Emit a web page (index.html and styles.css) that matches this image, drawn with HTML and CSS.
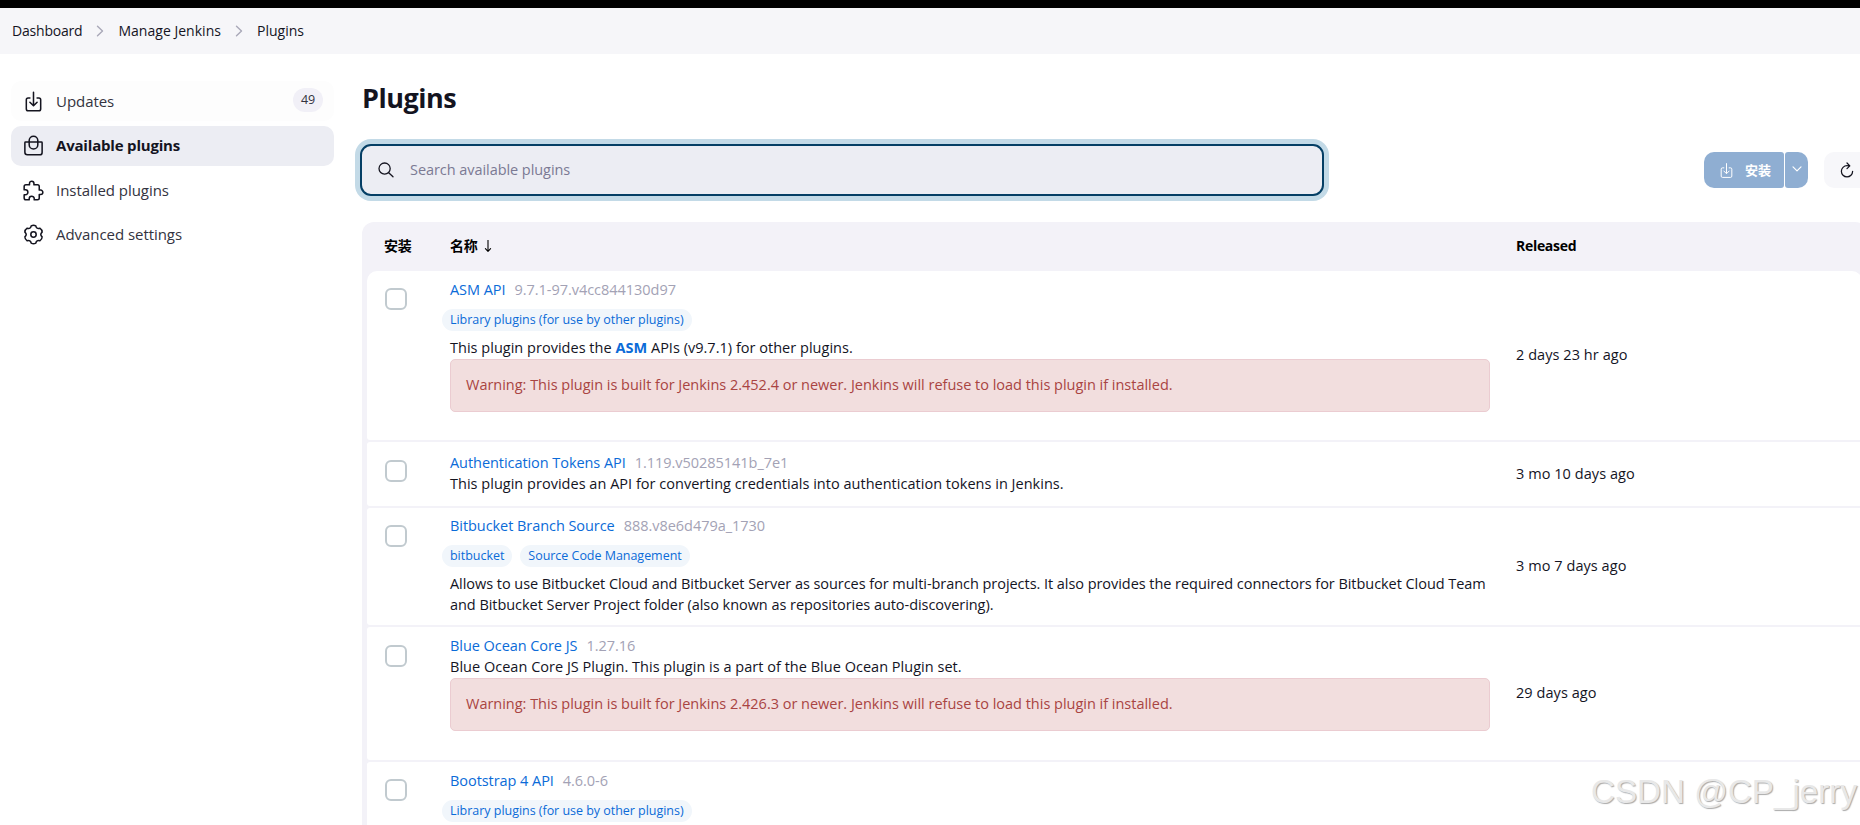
FILE: index.html
```html
<!DOCTYPE html>
<html lang="zh-CN">
<head>
    <meta charset="UTF-8">
    <meta name="viewport" content="width=device-width, initial-scale=1.0">
    <title>Plugins</title>
    <link rel="stylesheet" href="styles.css">
</head>
<body>
    <div class="topbar"></div>
    <nav class="breadcrumbs">
        <span class="crumb">Dashboard</span>
        <svg class="chevron" viewBox="0 0 8 12"><path d="M1.5 1.2l5 4.8-5 4.8"/></svg>
        <span class="crumb">Manage Jenkins</span>
        <svg class="chevron" viewBox="0 0 8 12"><path d="M1.5 1.2l5 4.8-5 4.8"/></svg>
        <span class="crumb">Plugins</span>
    </nav>

    <div class="page">
        <aside class="sidebar">
            <a class="task task-hover">
                <svg class="icon" viewBox="0 0 512 512"><path d="M336 176h40a40 40 0 0140 40v208a40 40 0 01-40 40H136a40 40 0 01-40-40V216a40 40 0 0140-40h40M176 272l80 80 80-80M256 48v288"/></svg>
                <span>Updates</span>
                <span class="badge">49</span>
            </a>
            <a class="task task-active">
                <svg class="icon" viewBox="0 0 512 512"><path d="M80 176a16 16 0 00-16 16v216c0 30.24 25.76 56 56 56h272c30.24 0 56-24.51 56-54.75V192a16 16 0 00-16-16zM160 176v-32a96 96 0 0196-96h0a96 96 0 0196 96v32M160 176v64a96 96 0 0096 96h0a96 96 0 0096-96v-64"/></svg>
                <span>Available plugins</span>
            </a>
            <a class="task">
                <svg class="icon" viewBox="0 0 512 512"><path d="M413.66 246.1H386a2 2 0 01-2-2v-77.24A38.86 38.86 0 00345.14 128H267.9a2 2 0 01-2-2V98.34c0-27.14-21.5-49.86-48.64-50.33a49.53 49.53 0 00-50.4 49.51V126a2 2 0 01-2 2H87.62A39.74 39.74 0 0048 167.62V238a2 2 0 002 2h26.91c29.37 0 53.68 25.48 54.09 54.85.42 29.87-23.51 57.15-53.29 57.15H50a2 2 0 00-2 2v70.38A39.74 39.74 0 0087.62 464H158a2 2 0 002-2v-20.93c0-30.28 24.75-56.35 55-57.06 30.1-.7 57 20.31 57 50.28V462a2 2 0 002 2h71.14A38.86 38.86 0 00384 425.14v-78a2 2 0 012-2h28.48c27.63 0 49.52-22.67 49.52-50.4s-23.2-48.64-50.34-48.64z"/></svg>
                <span>Installed plugins</span>
            </a>
            <a class="task">
                <svg class="icon icon-gear" viewBox="0 0 24 24"><path d="M9.6 3Q12 1.6 14.4 3Q15.1 6.6 18.6 5.4Q21 6.9 21 9.6Q18.2 12 21 14.4Q21 17.1 18.6 18.6Q15.1 17.4 14.4 21Q12 22.4 9.6 21Q8.9 17.4 5.4 18.6Q3 17.1 3 14.4Q5.8 12 3 9.6Q3 6.9 5.4 5.4Q8.9 6.6 9.6 3Z"/><circle cx="12" cy="12" r="2.8"/></svg>
                <span>Advanced settings</span>
            </a>
        </aside>

        <main class="main">
            <h1>Plugins</h1>

            <div class="controls">
                <div class="search">
                    <svg class="search-icon" viewBox="0 0 16 16"><circle cx="6.6" cy="6.6" r="5.6"/><path d="M10.7 10.7l4.3 4"/></svg>
                    <input type="text" placeholder="Search available plugins">
                </div>
                <div class="actions">
                    <button class="btn btn-install">
                        <svg class="btn-icon" viewBox="0 0 512 512"><path d="M336 176h40a40 40 0 0140 40v208a40 40 0 01-40 40H136a40 40 0 01-40-40V216a40 40 0 0140-40h40M176 272l80 80 80-80M256 48v288"/></svg>
                        <span>安装</span>
                    </button>
                    <button class="btn btn-more">
                        <svg class="more-icon" viewBox="0 0 10 6"><path d="M1 .8l4 4 4-4"/></svg>
                    </button>
                    <button class="btn btn-refresh">
                        <svg class="refresh-icon" viewBox="0 0 512 512"><path d="M320 146s24.36-12-64-12a160 160 0 10160 160M256 58l80 80-80 80"/></svg>
                    </button>
                </div>
            </div>

            <div class="table">
                <div class="thead">
                    <div class="col-check">安装</div>
                    <div class="col-name">名称
                        <svg class="sort" viewBox="0 0 8 12"><path d="M4 0v11M1.4 8.6L4 11.3l2.6-2.7"/></svg>
                    </div>
                    <div class="col-date">Released</div>
                </div>

                <div class="row row-warn-tags">
                    <div class="col-check"><span class="checkbox"></span></div>
                    <div class="col-name">
                        <div class="title"><a>ASM API</a><span class="version">9.7.1-97.v4cc844130d97</span></div>
                        <div class="tags"><a class="tag">Library plugins (for use by other plugins)</a></div>
                        <div class="desc">This plugin provides the <a class="strong">ASM</a> APIs (v9.7.1) for other plugins.</div>
                        <div class="alert">Warning: This plugin is built for Jenkins 2.452.4 or newer. Jenkins will refuse to load this plugin if installed.</div>
                    </div>
                    <div class="col-date">2 days 23 hr ago</div>
                </div>

                <div class="row row-plain">
                    <div class="col-check"><span class="checkbox"></span></div>
                    <div class="col-name">
                        <div class="title"><a>Authentication Tokens API</a><span class="version">1.119.v50285141b_7e1</span></div>
                        <div class="desc">This plugin provides an API for converting credentials into authentication tokens in Jenkins.</div>
                    </div>
                    <div class="col-date">3 mo 10 days ago</div>
                </div>

                <div class="row row-tags">
                    <div class="col-check"><span class="checkbox"></span></div>
                    <div class="col-name">
                        <div class="title"><a>Bitbucket Branch Source</a><span class="version">888.v8e6d479a_1730</span></div>
                        <div class="tags"><a class="tag">bitbucket</a><a class="tag">Source Code Management</a></div>
                        <div class="desc">Allows to use Bitbucket Cloud and Bitbucket Server as sources for multi-branch projects. It also provides the required connectors for Bitbucket Cloud Team<br>and Bitbucket Server Project folder (also known as repositories auto-discovering).</div>
                    </div>
                    <div class="col-date">3 mo 7 days ago</div>
                </div>

                <div class="row row-warn">
                    <div class="col-check"><span class="checkbox"></span></div>
                    <div class="col-name">
                        <div class="title"><a>Blue Ocean Core JS</a><span class="version">1.27.16</span></div>
                        <div class="desc">Blue Ocean Core JS Plugin. This plugin is a part of the Blue Ocean Plugin set.</div>
                        <div class="alert">Warning: This plugin is built for Jenkins 2.426.3 or newer. Jenkins will refuse to load this plugin if installed.</div>
                    </div>
                    <div class="col-date">29 days ago</div>
                </div>

                <div class="row row-warn-tags">
                    <div class="col-check"><span class="checkbox"></span></div>
                    <div class="col-name">
                        <div class="title"><a>Bootstrap 4 API</a><span class="version">4.6.0-6</span></div>
                        <div class="tags"><a class="tag">Library plugins (for use by other plugins)</a></div>
                    </div>
                    <div class="col-date"></div>
                </div>
            </div>
        </main>
    </div>

    <div class="watermark">CSDN @CP_jerry</div>
</body>
</html>
```
FILE: styles.css
```css
* {
    box-sizing: border-box;
}
body {
    margin: 0;
    height: 825px;
    overflow: hidden;
    background: #fff;
    color: #14141f;
    font-family: "Open Sans", "Noto Sans CJK SC", sans-serif;
    font-size: 14.5px;
    line-height: 21px;
}
svg {
    display: block;
    flex-shrink: 0;
    fill: none;
    stroke: currentColor;
    stroke-linecap: round;
    stroke-linejoin: round;
}
.topbar {
    height: 8px;
    background: #000;
}
.breadcrumbs {
    display: flex;
    align-items: center;
    height: 46px;
    padding: 0 0 1px 12px;
    background: #f6f6f9;
    font-size: 14px;
    letter-spacing: 0.02px;
}
.crumb:first-child {
    letter-spacing: -0.2px;
}
.chevron {
    width: 8px;
    height: 12px;
    margin: 0 14px;
    stroke: #a9a8b8;
    stroke-width: 1.4;
}
.page {
    display: flex;
}
.sidebar {
    display: flex;
    flex-direction: column;
    flex-shrink: 0;
    gap: 4.6px;
    width: 362px;
    padding: 27px 28px 0 11px;
}
.task {
    display: flex;
    align-items: center;
    height: 40px;
    padding: 0 11px 0 11px;
    border-radius: 10px;
    font-size: 15px;
    letter-spacing: -0.05px;
    color: #333340;
}
.task-hover {
    background: #fdfdfd;
}
.task-active {
    background: #ecedf3;
    color: #14141f;
    font-weight: 700;
    letter-spacing: -0.19px;
}
.icon {
    width: 23px;
    height: 23px;
    margin-right: 11px;
    stroke: #14141f;
    stroke-width: 34;
}
.icon-gear {
    stroke-width: 1.6;
}
.badge {
    margin: -2px 0 0 auto;
    width: 30px;
    height: 24px;
    border-radius: 12px;
    background: #f1f0f7;
    font-size: 12.5px;
    line-height: 23px;
    text-align: center;
}
.main {
    width: 1505px;
    flex-shrink: 0;
}
h1 {
    margin: 0;
    padding-top: 27px;
    font-size: 27px;
    font-weight: 700;
    line-height: 34px;
    letter-spacing: -0.5px;
}
.controls {
    display: flex;
    align-items: center;
    margin: 29px 0 26px -1px;
    height: 52px;
}
.search {
    display: flex;
    align-items: center;
    flex-shrink: 0;
    width: 964px;
    height: 52px;
    margin-left: -1px;
    padding-left: 16px;
    border: 2px solid #053f65;
    border-radius: 11px;
    background: #ecedf3;
    box-shadow: 0 0 0 5px #c3dae7;
}
.search-icon {
    width: 16px;
    height: 16px;
    margin-right: 16px;
    stroke-width: 1.3;
}
.search input {
    flex: 1;
    padding: 0 0 2px;
    border: 0;
    outline: 0;
    background: none;
    font: inherit;
    letter-spacing: -0.06px;
}
.search input::placeholder {
    color: #7b7a93;
    opacity: 1;
}
.actions {
    display: flex;
    flex-shrink: 0;
    margin-left: 380px;
}
.btn {
    display: flex;
    align-items: center;
    height: 36px;
    padding: 0;
    border: 0;
    color: #fff;
    background: #8faed2;
    font-family: inherit;
    font-size: 13px;
    font-weight: 700;
}
.btn-install {
    width: 80px;
    padding-left: 14px;
    border-radius: 10px 3px 3px 10px;
}
.btn-icon {
    width: 17px;
    height: 17px;
    margin-right: 10px;
    stroke-width: 30;
}
.btn-install span {
    padding-bottom: 2px;
}
.btn-more {
    justify-content: center;
    width: 23px;
    margin-left: 1px;
    border-radius: 3px 10px 10px 3px;
}
.more-icon {
    width: 10px;
    height: 6px;
    margin-bottom: 2px;
    stroke-width: 1.2;
}
.btn-refresh {
    width: 46px;
    margin-left: 16px;
    padding-left: 14px;
    border-radius: 10px;
    background: #f7f7fa;
    color: #14141f;
}
.refresh-icon {
    width: 18px;
    height: 18px;
    stroke-width: 36;
}
.table {
    height: 603px;
    padding: 0 5px;
    border-radius: 12px 12px 0 0;
    background: #f3f2f8;
    overflow: hidden;
}
.thead {
    display: flex;
    align-items: center;
    height: 49px;
    padding-bottom: 2px;
    color: #000;
    font-size: 14px;
    font-weight: 700;
    letter-spacing: -0.3px;
}
.row {
    display: flex;
    margin-bottom: 2px;
    border-radius: 3px;
    background: #fff;
}
.thead + .row {
    border-radius: 10px 10px 3px 3px;
}
.col-check {
    width: 83px;
    padding-left: 17px;
}
.col-name {
    width: 1040px;
}
.thead .col-name {
    display: flex;
    align-items: center;
}
.sort {
    width: 8px;
    height: 12px;
    margin-left: 7px;
    stroke-width: 1.1;
}
.col-date {
    margin-left: 26px;
}
.row .col-date {
    align-self: center;
    padding-bottom: 2px;
    letter-spacing: 0.06px;
}
.row .col-check {
    padding: 17px 0 0 18px;
}
.row .col-name {
    padding-top: 8px;
}
.row-warn-tags {
    height: 169px;
}
.row-plain {
    height: 64px;
}
.row-plain .col-name {
    padding-top: 10px;
}
.row-plain .col-check,
.row-warn .col-check {
    padding-top: 18px;
}
.row-tags {
    height: 117px;
}
.row-tags .col-name {
    padding-top: 7px;
}
.row-warn {
    height: 133px;
}
.checkbox {
    display: block;
    width: 22px;
    height: 22px;
    border: 2px solid #c1cacf;
    border-radius: 6px;
}
.title,
.desc {
    height: 21px;
    white-space: nowrap;
    color: #14141f;
    letter-spacing: 0.02px;
}
.row-tags .desc {
    letter-spacing: -0.05px;
}
.title a,
.desc a,
.tag {
    color: #0b6bd8;
}
.title a {
    letter-spacing: -0.06px;
}
.version {
    margin-left: 9px;
    color: #a3a2b5;
    letter-spacing: -0.03px;
}
.strong {
    font-weight: 700;
}
.tags {
    display: flex;
    gap: 8px;
    margin: 9px 0 6px -8px;
}
.tag {
    height: 22px;
    padding: 0 8px;
    border-radius: 11px;
    background: #f1f6fb;
    font-size: 12.5px;
    line-height: 21px;
    letter-spacing: -0.03px;
}
.alert {
    height: 53px;
    margin-top: 1px;
    padding: 14px 15px;
    border: 1px solid #ebccd1;
    border-radius: 5px;
    background: #f2dede;
    color: #a94442;
    letter-spacing: -0.013px;
}
.watermark {
    position: absolute;
    right: 3px;
    bottom: 13px;
    color: #e8e8e8;
    font-family: "Liberation Sans", sans-serif;
    font-size: 33.2px;
    line-height: 40px;
    text-shadow: 1px 1px 1px #aaa;
}
```
